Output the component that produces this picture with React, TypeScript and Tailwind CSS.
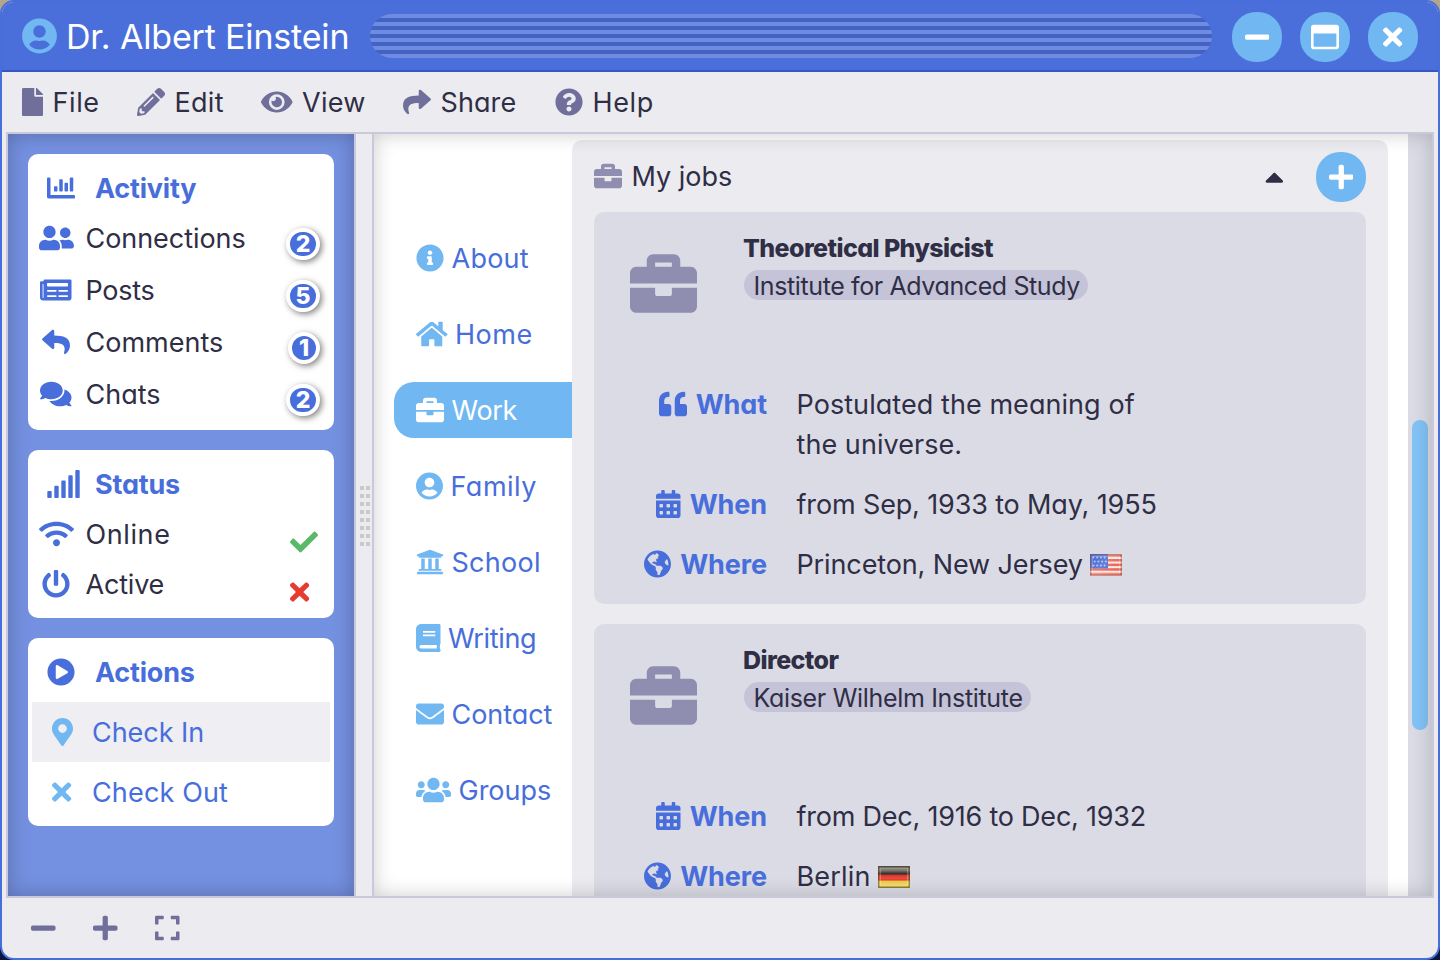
import type { ReactNode } from 'react';
import type { IconType } from 'react-icons';
import {
  FaBook, FaBriefcase, FaCalendarAlt, FaCaretUp, FaChartBar, FaCheck, FaComments, FaEnvelope,
  FaExpand, FaEye, FaFile, FaGlobeAmericas, FaHome, FaInfoCircle, FaMapMarkerAlt, FaMinus,
  FaNewspaper, FaPencilAlt, FaPlayCircle, FaPlus, FaPowerOff, FaQuestionCircle, FaQuoteLeft,
  FaRegWindowMaximize, FaReply, FaShare, FaSignal, FaTimes, FaUniversity, FaUserCircle,
  FaUserFriends, FaUsers, FaWifi,
} from 'react-icons/fa';

/* Natural glyph widths at a height of 28px; glyphs not listed are square. */
const glyphWidths = new Map<IconType, string>([
  [FaUserFriends, 'w-[35px]'],
  [FaUsers, 'w-[35px]'],
  [FaWifi, 'w-[35px]'],
  [FaSignal, 'w-[35px]'],
  [FaEye, 'w-[31.5px]'],
  [FaHome, 'w-[31.5px]'],
  [FaNewspaper, 'w-[31.5px]'],
  [FaComments, 'w-[31.5px]'],
  [FaGlobeAmericas, 'w-[27px]'],
  [FaUserCircle, 'w-[27px]'],
  [FaBook, 'w-[24.5px]'],
  [FaCalendarAlt, 'w-[24.5px]'],
  [FaMinus, 'w-[24.5px]'],
  [FaPlus, 'w-[24.5px]'],
  [FaExpand, 'w-[24.5px]'],
  [FaFile, 'w-[21px]'],
  [FaMapMarkerAlt, 'w-[21px]'],
  [FaTimes, 'w-[19.25px]'],
]);

function Glyph({ icon: Icon, className = '' }: { icon: IconType; className?: string }) {
  return <Icon className={`h-7 shrink-0 ${glyphWidths.get(Icon) ?? 'w-7'} ${className}`} />;
}

const menu: { icon: IconType; label: string; width: string; tracking: string }[] = [
  { icon: FaFile, label: 'File', width: 'w-[115px]', tracking: 'tracking-[0.6px]' },
  { icon: FaPencilAlt, label: 'Edit', width: 'w-[124px]', tracking: 'tracking-[0.3px]' },
  { icon: FaEye, label: 'View', width: 'w-[142px]', tracking: 'tracking-[0.3px]' },
  { icon: FaShare, label: 'Share', width: 'w-[152px]', tracking: 'tracking-[0.1px]' },
  { icon: FaQuestionCircle, label: 'Help', width: 'w-[115px]', tracking: 'tracking-[0.6px]' },
];

const activity: { icon: IconType; label: string; count: number; tracking: string }[] = [
  { icon: FaUserFriends, label: 'Connections', count: 2, tracking: 'tracking-[-0.05px]' },
  { icon: FaNewspaper, label: 'Posts', count: 5, tracking: 'tracking-[-0.3px]' },
  { icon: FaReply, label: 'Comments', count: 1, tracking: 'tracking-[0px]' },
  { icon: FaComments, label: 'Chats', count: 2, tracking: 'tracking-[0px]' },
];

const tabs: { icon: IconType; label: string; tracking: string; active?: boolean }[] = [
  { icon: FaInfoCircle, label: 'About', tracking: 'tracking-[0.25px]' },
  { icon: FaHome, label: 'Home', tracking: 'tracking-[0.5px]' },
  { icon: FaBriefcase, label: 'Work', tracking: 'tracking-[-0.3px]', active: true },
  { icon: FaUserCircle, label: 'Family', tracking: 'tracking-[0.5px]' },
  { icon: FaUniversity, label: 'School', tracking: 'tracking-[0.3px]' },
  { icon: FaBook, label: 'Writing', tracking: 'tracking-[-0.35px]' },
  { icon: FaEnvelope, label: 'Contact', tracking: 'tracking-[-0.05px]' },
  { icon: FaUsers, label: 'Groups', tracking: 'tracking-[0px]' },
];

function RoundButton({ icon }: { icon: IconType }) {
  return (
    <button className="flex size-[50px] shrink-0 items-center justify-center rounded-[24px] bg-[#71b7f2] text-white">
      <Glyph icon={icon} />
    </button>
  );
}

function SideCard({ icon, title, className, children }: { icon: IconType; title: string; className: string; children: ReactNode }) {
  return (
    <section className={`rounded-[10px] bg-white pt-[10px] ${className}`}>
      <h2 className="flex h-12 items-center pl-[19px] font-bold tracking-[-0.2px] text-[#486edb]">
        <span className={`w-12 shrink-0 ${icon === FaSignal ? '-ml-px mr-px' : ''}`}><Glyph icon={icon} /></span>
        <span className="pt-0.5">{title}</span>
      </h2>
      {children}
    </section>
  );
}

function SideRow({ icon, label, height, tracking, children }: { icon: IconType; label: string; height: string; tracking: string; children: ReactNode }) {
  return (
    <div className={`flex items-center pr-[14px] ${height}`}>
      <span className="flex w-14 shrink-0 justify-center text-[#486edb]"><Glyph icon={icon} /></span>
      <span className={`flex-1 pt-0.5 pl-[1.5px] ${tracking}`}>{label}</span>
      {children}
    </div>
  );
}

function Badge({ count }: { count: number }) {
  return (
    <span className={`mt-3 flex h-8 items-center justify-center rounded-[16px] border-4 border-white bg-[#486edb] text-[23px] leading-none font-extrabold text-white shadow-[2px_2px_6px_rgba(0,0,0,0.5)] ${count === 1 ? 'w-8' : 'w-[34px]'}`}>
      {count}
    </span>
  );
}

function ActionRow({ icon, label, className }: { icon: IconType; label: string; className: string }) {
  return (
    <div className={`mx-1 flex h-[60px] items-center text-[#486edb] ${className}`}>
      <span className="flex w-[60px] shrink-0 justify-center text-[#71b7f2]"><Glyph icon={icon} /></span>
      <span className="pt-0.5">{label}</span>
    </div>
  );
}

function Job({ title, place, placeTracking, children, className }: { title: string; place: string; placeTracking: string; children: ReactNode; className: string }) {
  return (
    <article className={`rounded-[10px] bg-[#dbdbe6] ${className}`}>
      <div className="flex h-[173px]">
        <div className="w-[150px] shrink-0 pt-[38px] pl-9 text-[#8f8eb1]">
          <FaBriefcase className="size-[67px]" />
        </div>
        <div className="flex flex-col items-start pt-5 text-[25px]">
          <h3 className="-ml-px h-[38px] leading-8 font-extrabold tracking-[-0.6px] whitespace-nowrap">{title}</h3>
          <span className={`flex h-[30px] items-center rounded-full bg-[#c4c3d7] pr-2 pl-[9.5px] pt-0.5 whitespace-nowrap ${placeTracking}`}>{place}</span>
        </div>
      </div>
      <dl className="flex flex-col gap-5 leading-10">{children}</dl>
    </article>
  );
}

function Fact({ icon, term, tracking, children }: { icon: IconType; term: string; tracking: string; children: ReactNode }) {
  return (
    <div className="flex">
      <dt className="flex h-10 w-[173px] shrink-0 items-center justify-end gap-[9px] font-bold tracking-[-0.1px] text-[#486edb]">
        <Glyph icon={icon} className="-mt-0.5" />
        {term}
      </dt>
      <dd className={`flex items-center pl-[29.5px] whitespace-nowrap ${tracking}`}>{children}</dd>
    </div>
  );
}

function FlagUS() {
  return (
    <svg viewBox="0 0 32 22" className="ml-[7px] h-[22px] w-8">
      <defs>
        <linearGradient id="us-shine" x1="0" y1="0" x2="1" y2="0.6">
          <stop offset="0" stopColor="#fff" stopOpacity="0.02" />
          <stop offset="0.5" stopColor="#fff" stopOpacity="0.2" />
          <stop offset="1" stopColor="#fff" stopOpacity="0.05" />
        </linearGradient>
      </defs>
      <rect width="32" height="22" fill="#f7e6df" />
      {[0, 1, 2, 3, 4].map((i) => (
        <rect key={i} y={i * 4.6 + 0.4} width="32" height="2.5" fill="#ea584c" />
      ))}
      <rect width="18" height="14.4" fill="#3d60cf" />
      {[3.5, 7.5, 11.5].map((y, r) =>
        [3.5, 7.2, 10.9, 14.6].map((x) => <circle key={`${x}-${y}`} cx={x + (r % 2) * 1.2} cy={y} r="1" fill="#a9c2f2" />),
      )}
      <rect width="32" height="22" fill="url(#us-shine)" />
      <rect x="0.75" y="0.75" width="30.5" height="20.5" fill="none" stroke="#8a4a3a" strokeOpacity="0.4" strokeWidth="1.5" />
      <rect x="2.2" y="2.2" width="27.6" height="17.6" fill="none" stroke="#fff" strokeOpacity="0.35" />
    </svg>
  );
}

function FlagDE() {
  return (
    <svg viewBox="0 0 32 22" className="ml-[7px] h-[22px] w-8">
      <defs>
        <linearGradient id="de-bands" x1="0" y1="0" x2="0" y2="1">
          <stop offset="0" stopColor="#55564a" />
          <stop offset="0.18" stopColor="#85857c" />
          <stop offset="0.36" stopColor="#332824" />
          <stop offset="0.42" stopColor="#d2382c" />
          <stop offset="0.55" stopColor="#ee4c40" />
          <stop offset="0.63" stopColor="#df4032" />
          <stop offset="0.7" stopColor="#efc94a" />
          <stop offset="0.85" stopColor="#efe062" />
          <stop offset="1" stopColor="#d1ae40" />
        </linearGradient>
      </defs>
      <rect width="32" height="22" fill="url(#de-bands)" />
      <rect x="0.75" y="0.75" width="30.5" height="20.5" fill="none" stroke="#4d3f1c" strokeOpacity="0.5" strokeWidth="1.5" />
      <rect x="2.2" y="2.2" width="27.6" height="17.6" fill="none" stroke="#fff" strokeOpacity="0.35" />
    </svg>
  );
}

export default function App() {
  return (
    <div className="h-[960px] w-[1440px] bg-linear-to-b from-[#b5a68a] to-[#0b1440]">
      <div className="flex h-full flex-col overflow-hidden rounded-[14px] border-2 border-[#486edb] bg-[#ebebf0] font-['Inter','Liberation_Sans',sans-serif] text-[27px] leading-[1.2] text-[#2f2e45] [font-feature-settings:'cv11']">
        <header className="-mx-0.5 -mt-0.5 flex h-[72px] shrink-0 items-center border-b-2 border-[#3555c9] bg-[#4a6fdb] px-[22px] pt-0.5">
          <h1 className="flex w-[348px] shrink-0 items-center gap-[9px] text-[34px] leading-[40px] tracking-[-0.17px] whitespace-nowrap text-white">
            <FaUserCircle className="h-9 w-[35px] shrink-0 text-[#71b7f2]" />
            <span className="pt-px">Dr. Albert Einstein</span>
          </h1>
          <div className="mr-5 h-11 flex-1 rounded-[22px] bg-[repeating-linear-gradient(180deg,#708be2_0_4px,#4263c1_4px_8px)]" />
          <div className="flex gap-[18px] pt-0.5">
            <RoundButton icon={FaMinus} />
            <RoundButton icon={FaRegWindowMaximize} />
            <RoundButton icon={FaTimes} />
          </div>
        </header>

        <nav className="flex h-[60px] shrink-0 items-center pl-5">
          {menu.map(({ icon, label, width, tracking }) => (
            <div key={label} className={`flex items-center gap-[9.5px] ${tracking} ${width}`}>
              <Glyph icon={icon} className="text-[#706f9b]" />
              <span className="pt-0.5">{label}</span>
            </div>
          ))}
        </nav>

        <div className="mx-1 flex h-[766px] shrink-0 border-2 border-[#cac9db]">
          <aside className="flex w-[346px] shrink-0 flex-col gap-5 bg-[#7490e0] p-5 shadow-[inset_0_0_20px_rgba(0,0,0,0.25)]">
            <SideCard icon={FaChartBar} title="Activity" className="h-[276px]">
              {activity.map(({ icon, label, count, tracking }) => (
                <SideRow key={label} icon={icon} label={label} height="h-[52px]" tracking={tracking}>
                  <Badge count={count} />
                </SideRow>
              ))}
            </SideCard>
            <SideCard icon={FaSignal} title="Status" className="h-[168px]">
              <SideRow icon={FaWifi} label="Online" height="h-[50px] mt-px" tracking="tracking-[0.6px]">
                <span className="w-[30px] pt-[15px]"><Glyph icon={FaCheck} className="text-[#5cb96a]" /></span>
              </SideRow>
              <SideRow icon={FaPowerOff} label="Active" height="h-[50px]" tracking="tracking-[-0.2px]">
                <span className="w-[30px] pt-[15px]"><Glyph icon={FaTimes} className="text-[#e63b2e]" /></span>
              </SideRow>
            </SideCard>
            <SideCard icon={FaPlayCircle} title="Actions" className="h-[188px]">
              <ActionRow icon={FaMapMarkerAlt} label="Check In" className="mt-1.5 bg-[#eeeef3] tracking-[-0.05px]" />
              <ActionRow icon={FaTimes} label="Check Out" className="tracking-[0.15px]" />
            </SideCard>
          </aside>

          <div className="flex w-5 shrink-0 items-center border-x-2 border-[#cac9db] pt-0.5 pl-1">
            <div className="grid grid-cols-[4px_4px] gap-x-0.5 gap-y-1">
              {Array.from({ length: 16 }, (_, i) => <span key={i} className="size-1 bg-[#c9c9cb]" />)}
            </div>
          </div>

          <main className="relative flex min-w-0 flex-1 overflow-hidden bg-white">
            <div className="flex w-[198px] shrink-0 flex-col gap-5 pt-24 pl-5">
              {tabs.map(({ icon, label, tracking, active }) => (
                <div
                  key={label}
                  className={`flex h-14 shrink-0 items-center gap-[7.5px] rounded-l-[20px] pl-[22px] ${tracking} ${active ? 'bg-[#71b7f2] text-white' : 'text-[#486edb]'}`}
                >
                  <Glyph icon={icon} className={active ? 'text-white' : 'text-[#71b7f2]'} />
                  <span className="pt-0.5">{label}</span>
                </div>
              ))}
            </div>

            <div className="mt-1.5 flex w-[816px] shrink-0 flex-col rounded-t-[10px] bg-[#ebebf0] px-[22px] pt-3">
              <div className="mb-[10px] flex h-[50px] shrink-0 items-center">
                <Glyph icon={FaBriefcase} className="mr-[9.5px] -mt-0.5 text-[#8f8eb1]" />
                <span className="flex-1">My jobs</span>
                <FaCaretUp className="mr-8 h-[30px] w-[18.75px]" />
                <RoundButton icon={FaPlus} />
              </div>
              <Job title="Theoretical Physicist" place="Institute for Advanced Study" placeTracking="tracking-[-0.39px]" className="mb-5 h-[392px] shrink-0">
                <Fact icon={FaQuoteLeft} term="What" tracking="tracking-[0.06px]">
                  Postulated the meaning of<br />the universe.
                </Fact>
                <Fact icon={FaCalendarAlt} term="When" tracking="tracking-[-0.14px]">from Sep, 1933 to May, 1955</Fact>
                <Fact icon={FaGlobeAmericas} term="Where" tracking="tracking-[-0.12px]">Princeton, New Jersey<FlagUS /></Fact>
              </Job>
              <Job title="Director" place="Kaiser Wilhelm Institute" placeTracking="tracking-[-0.32px]" className="h-[392px] shrink-0">
                <Fact icon={FaCalendarAlt} term="When" tracking="tracking-[-0.22px]">from Dec, 1916 to Dec, 1932</Fact>
                <Fact icon={FaGlobeAmericas} term="Where" tracking="tracking-[0.2px]">Berlin<FlagDE /></Fact>
              </Job>
            </div>

            <div className="ml-5 w-6 shrink-0 bg-[#dbdbe6] px-1 pt-[286px]">
              <div className="h-[310px] rounded-full bg-[#82c2f4]" />
            </div>
            <div className="pointer-events-none absolute inset-0 shadow-[inset_0_0_20px_rgba(0,0,0,0.2)]" />
          </main>
        </div>

        <footer className="flex h-[60px] shrink-0 items-center gap-[37.5px] pl-[29px] text-[#706f9b]">
          <Glyph icon={FaMinus} />
          <Glyph icon={FaPlus} />
          <Glyph icon={FaExpand} />
        </footer>
      </div>
    </div>
  );
}
